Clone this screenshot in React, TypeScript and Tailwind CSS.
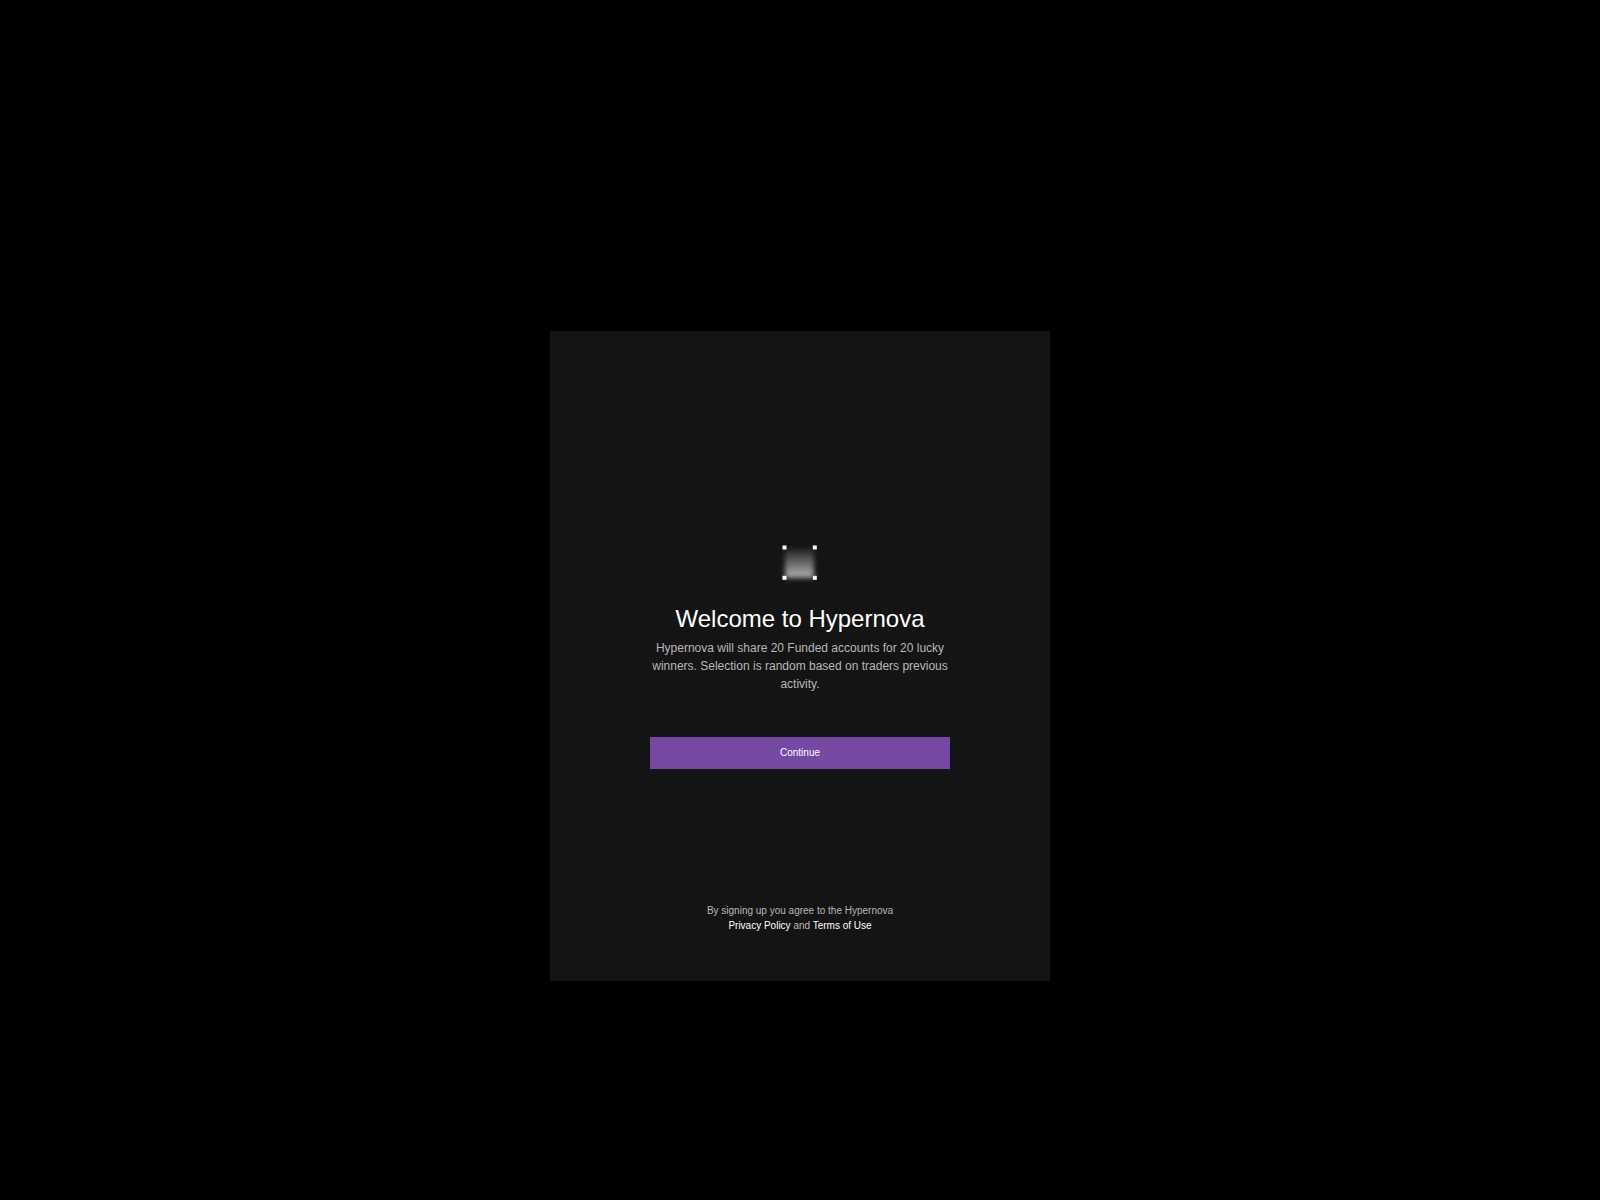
import React from 'react';

function Logo() {
  return (
    <svg className="w-9 h-9" viewBox="0 0 36 36" fill="none" overflow="visible" aria-hidden="true">
      <defs>
        <linearGradient id="glow" x1="0" y1="1" x2="0" y2="30" gradientUnits="userSpaceOnUse">
          <stop offset="0" stopColor="#fff" stopOpacity="0" />
          <stop offset="1" stopColor="#fff" stopOpacity="0.62" />
        </linearGradient>
        <filter
          id="soften"
          x="-6"
          y="-6"
          width="48"
          height="48"
          filterUnits="userSpaceOnUse"
          colorInterpolationFilters="sRGB"
        >
          <feGaussianBlur stdDeviation="2.5" />
        </filter>
      </defs>
      <rect x="3" y="3.5" width="29" height="29.5" fill="url(#glow)" filter="url(#soften)" />
      <rect x="0.5" y="0.5" width="4" height="4" fill="#fff" />
      <rect x="30.8" y="0.5" width="4" height="4" fill="#fff" />
      <rect x="0.5" y="30.8" width="4" height="4" fill="#fff" />
      <rect x="30.8" y="30.8" width="4" height="4" fill="#fff" />
    </svg>
  );
}

export default function App() {
  return (
    <div className="min-h-screen bg-black flex items-center justify-center pt-28 font-['Liberation_Sans',Arial,sans-serif]">
      <main className="w-full max-w-[500px] min-h-[650px] bg-[#141414] flex flex-col items-center px-6 pb-12 text-center">
        {/* Welcome */}
        <div className="w-full max-w-[300px] flex flex-col items-center pt-[214px]">
          <Logo />
          <h1 className="mt-5 text-[24px] leading-9 text-white">Welcome to Hypernova</h1>
          <p className="mt-[2px] text-[12px] leading-[18px] text-[#b8b8b8]">
            Hypernova will share 20 Funded accounts for 20 lucky winners. Selection is random based on
            traders previous activity.
          </p>
          <button type="button" className="mt-11 w-full h-8 pb-px bg-[#7448a3] text-[10px] leading-[15px] text-white">
            Continue
          </button>
        </div>

        {/* Legal */}
        <p className="mt-auto text-[10px] leading-[15px] text-[#b8b8b8]">
          By signing up you agree to the Hypernova
          <br />
          <a href="#privacy" className="text-white">Privacy Policy</a> and{' '}
          <a href="#terms" className="text-white">Terms of Use</a>
        </p>
      </main>
    </div>
  );
}
